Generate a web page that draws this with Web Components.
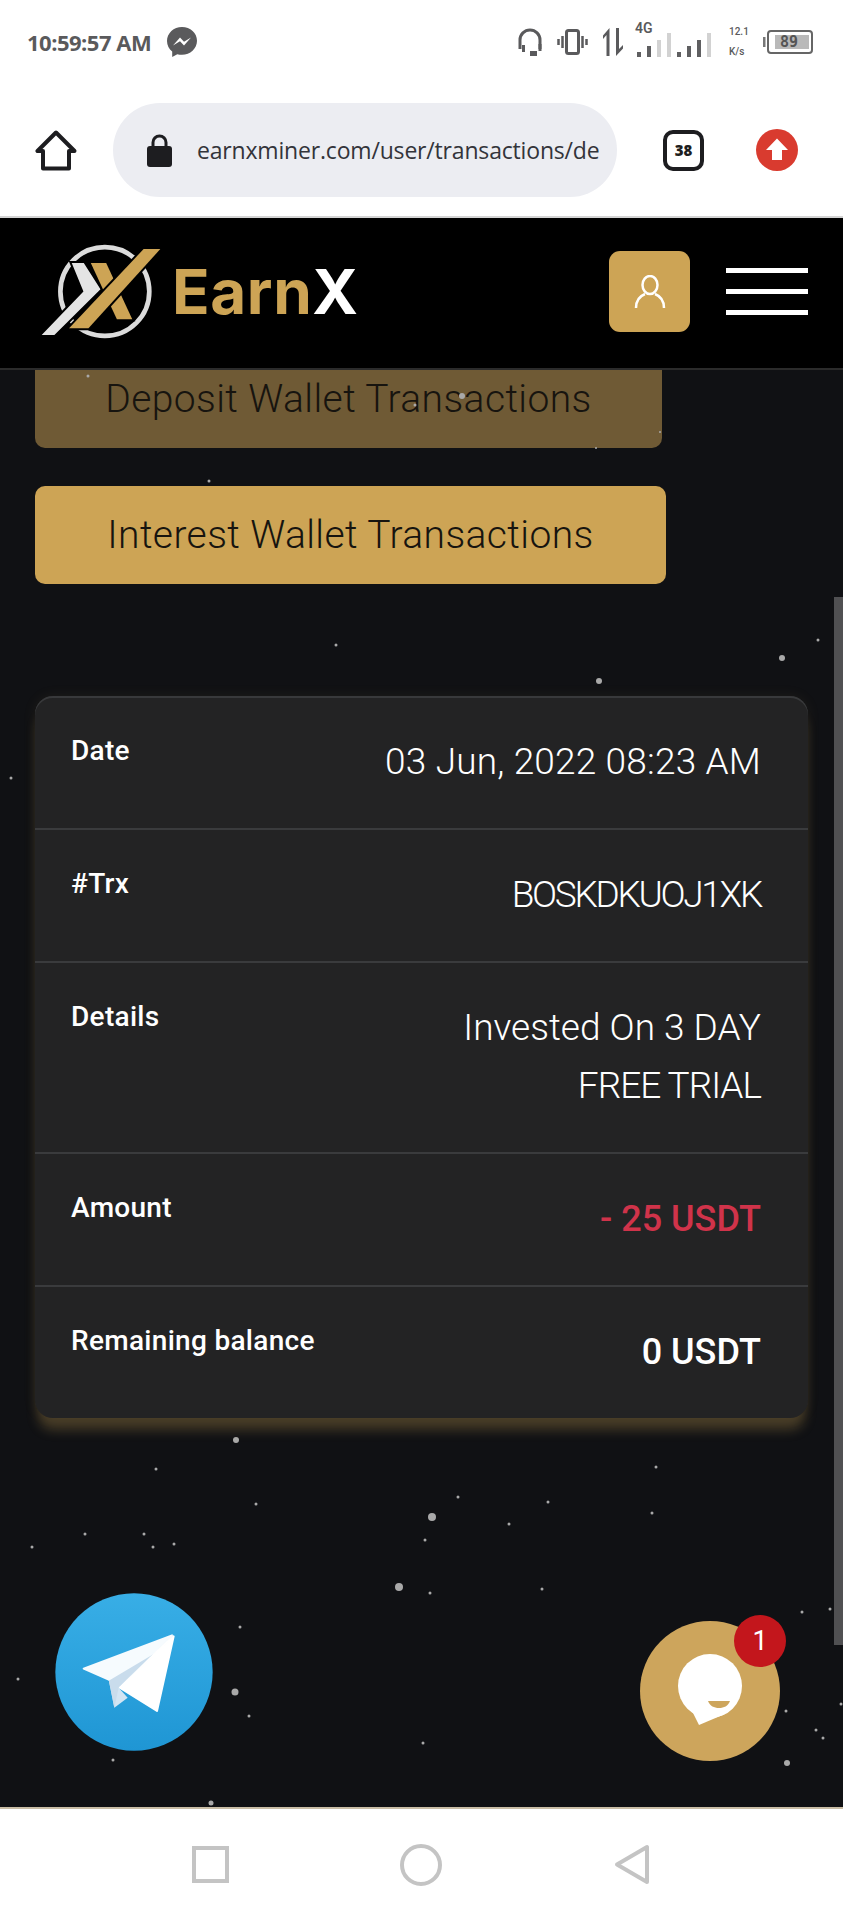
<!DOCTYPE html>
<html>
<head>
<meta charset="utf-8">
<title>EarnX</title>
<style>
  html, body { margin: 0; padding: 0; background: #101114; }
  body { font-family: Roboto, "Liberation Sans", sans-serif; }
  app-shell { width: 843px; height: 1920px; }
</style>
</head>
<body>
<app-shell>
  <status-bar></status-bar>
  <browser-bar url="earnxminer.com/user/transactions/de" tabs="38"></browser-bar>
  <site-header></site-header>
  <page-main>
    <wallet-button width="627" faded>Deposit Wallet Transactions</wallet-button>
    <wallet-button width="631">Interest Wallet Transactions</wallet-button>
    <tx-card>
      <tx-row track="0.17"><span slot="label">Date</span>03 Jun, 2022 08:23 AM</tx-row>
      <tx-row track="-2.3"><span slot="label">#Trx</span>BOSKDKUOJ1XK</tx-row>
      <tx-row><span slot="label">Details</span>Invested On 3 DAY<br><span style="letter-spacing:-1px">FREE TRIAL</span></tx-row>
      <tx-row tone="red"><span slot="label">Amount</span>- 25 USDT</tx-row>
      <tx-row tone="strong" last><span slot="label">Remaining balance</span>0 USDT</tx-row>
    </tx-card>
  </page-main>
  <nav-bar></nav-bar>
</app-shell>

<script>
class AppShell extends HTMLElement {
  constructor() {
    super();
    this.attachShadow({ mode: 'open' });
  }

  connectedCallback() {
    this.shadowRoot.innerHTML = `
      <style>
        :host { display: flex; flex-direction: column; overflow: hidden; }
      </style>
      <slot></slot>
    `;
  }
}

class StatusBar extends HTMLElement {
  constructor() {
    super();
    this.attachShadow({ mode: 'open' });
  }

  connectedCallback() {
    this.shadowRoot.innerHTML = `
      <style>
        :host {
          display: flex;
          align-items: center;
          height: 84px;
          padding: 0 30px 0 27px;
          box-sizing: border-box;
          background: #fff;
          color: #5a5a5c;
          font-family: "Open Sans", sans-serif;
        }
        .time { font-size: 22px; font-weight: 700; letter-spacing: -0.5px; width: 139px; white-space: nowrap; }
        .right { margin-left: auto; display: flex; align-items: center; }
        svg { display: block; }
        .net { position: relative; width: 100px; height: 34px; margin: 0 0 0 10px; }
        .net span { position: absolute; left: 2px; top: -4px; font: 600 14px/14px Roboto, sans-serif; }
        .net svg { position: absolute; left: 0; top: 0; }
        .speed { display: flex; flex-direction: column; width: 22px; margin: 0 12px 0 -4px; font: 500 10px/20px Roboto, sans-serif; text-align: left; gap: 0; }
        .batt { position: relative; width: 50px; height: 24px; }
        .batt span { position: absolute; left: 8px; right: 0; top: 0; text-align: center; font: 700 15px/24px "DejaVu Sans Mono", monospace; letter-spacing: 0; color: #555; padding-right: 6px; }
      </style>
      <div class="time">10:59:57 AM</div>
      <svg width="32" height="32" viewBox="0 0 32 32">
        <path d="M16 1C7.700 1 1 7.200 1 15c0 4.300 2 8 5.200 10.500V31l5.100-2.800c1.500.4 3 .6 4.700.6 8.300 0 15-6.200 15-14S24.300 1 16 1z" fill="#5a5a5c"/>
        <path d="M7 19.500l7-8 4 4.200 7-4.200-7 8-4-4.200z" fill="#fff"/>
      </svg>
      <div class="right">
        <svg width="26" height="30" viewBox="0 0 26 30" fill="none" stroke="#5a5a5c" stroke-width="3">
          <path d="M3 22V13a10 10 0 0 1 20 0v9"/>
          <path d="M6.500 18v7M23 17v7"/>
          <path d="M13 26.500h7" stroke-width="5"/>
        </svg>
        <svg style="margin-left:14px" width="31" height="26" viewBox="0 0 31 26" fill="none" stroke="#5a5a5c">
          <rect x="9.500" y="1.500" width="12" height="23" rx="2" stroke-width="3"/>
          <path d="M1.500 10v6M5.500 7v12M25.500 7v12M29.500 10v6" stroke-width="2.500"/>
        </svg>
        <svg style="margin-left:15px" width="20" height="28" viewBox="0 0 20 28" fill="#5a5a5c">
          <path d="M6.500 0v28h-3V7L0 11V7.500z"/>
          <path d="M13 0h3v21l4-4v3.500L13 28z"/>
        </svg>
        <div class="net">
          <span>4G</span>
          <svg width="100" height="34" viewBox="0 0 100 34">
            <g fill="#5f5f61">
              <rect x="4" y="27" width="4" height="5"/><rect x="14" y="21" width="4" height="11"/>
              <rect x="44" y="27" width="4" height="5"/><rect x="54" y="21" width="4" height="11"/><rect x="64" y="15" width="4" height="17"/>
            </g>
            <g fill="#d2d2d2">
              <rect x="24" y="15" width="4" height="17"/><rect x="34" y="8" width="4" height="24"/><rect x="74" y="8" width="4" height="24"/>
            </g>
          </svg>
        </div>
        <div class="speed"><span>12.1</span><span>K/s</span></div>
        <div class="batt">
          <svg width="50" height="24" viewBox="0 0 50 24">
            <rect x="0" y="7" width="2.500" height="10" fill="#777"/>
            <rect x="5" y="1" width="44" height="22" rx="3" fill="none" stroke="#666" stroke-width="2"/>
            <rect x="12" y="5" width="34" height="14" fill="#b9b9b9"/>
          </svg>
          <span>89</span>
        </div>
      </div>
    `;
  }
}

class BrowserBar extends HTMLElement {
  constructor() {
    super();
    this.attachShadow({ mode: 'open' });
  }

  connectedCallback() {
    this.shadowRoot.innerHTML = `
      <style>
        :host {
          display: flex;
          align-items: center;
          height: 134px;
          padding: 0 45px 0 35px;
          box-sizing: border-box;
          background: #fff;
          border-bottom: 2px solid #d4d4d4;
          color: #1d1d20;
        }
        svg { display: block; flex: none; }
        .pill {
          display: flex;
          align-items: center;
          width: 504px;
          height: 94px;
          margin: 0 46px 0 36px;
          padding-left: 33px;
          box-sizing: border-box;
          border-radius: 47px;
          background: #ecedf2;
        }
        .url {
          margin-left: 24px;
          font: 500 23px/1 "Open Sans", sans-serif;
          letter-spacing: -0.18px;
          color: #33343a;
          white-space: nowrap;
        }
        .tabs {
          display: flex;
          align-items: center;
          justify-content: center;
          width: 41px;
          height: 41px;
          box-sizing: border-box;
          border: 4px solid #1d1d20;
          border-radius: 10px;
          font: 800 15px/1 "Open Sans", sans-serif;
          margin-right: 52px;
        }
      </style>
      <svg width="42" height="41" viewBox="0 0 42 41" fill="none" stroke="#1d1d20" stroke-width="4" stroke-linejoin="round">
        <path d="M21 2.500L2.500 21h5.500v17.500h26V21h5.500z"/>
      </svg>
      <div class="pill">
        <svg width="27" height="33" viewBox="0 0 27 33">
          <path d="M7 14V8.500a6.500 6.500 0 0 1 13 0V14" fill="none" stroke="#1d1d20" stroke-width="3"/>
          <rect x="1" y="12" width="25" height="21" rx="3" fill="#1d1d20"/>
        </svg>
        <span class="url">${this.getAttribute('url')}</span>
      </div>
      <div class="tabs">${this.getAttribute('tabs')}</div>
      <svg width="42" height="42" viewBox="0 0 42 42">
        <circle cx="21" cy="21" r="21" fill="#d93b2f"/>
        <path d="M21 9.500L32 21h-6v10H16V21h-6z" fill="#fff"/>
      </svg>
    `;
  }
}

class SiteHeader extends HTMLElement {
  constructor() {
    super();
    this.attachShadow({ mode: 'open' });
  }

  connectedCallback() {
    this.shadowRoot.innerHTML = `
      <style>
        :host {
          display: flex;
          align-items: center;
          height: 152px;
          padding: 0 35px 3px 40px;
          box-sizing: border-box;
          background: #000;
          border-bottom: 2px solid #2b2b2b;
        }
        svg { display: block; }
        .brand { display: flex; align-items: center; gap: 13px; }
        .word { font: 700 62px/1 Inter, sans-serif; color: #cda455; letter-spacing: 0.6px; margin-left: -3px; }
        .word b { color: #fff; font-weight: 700; }
        .user {
          display: flex;
          align-items: center;
          justify-content: center;
          width: 81px;
          height: 81px;
          margin: 0 36px 0 auto;
          border-radius: 11px;
          background: #cda455;
        }
        .burger { display: flex; flex-direction: column; gap: 16px; width: 82px; }
        .burger i { display: block; height: 5px; background: #fff; }
      </style>
      <div class="brand">
        <svg width="122" height="97" viewBox="60 40 365 290">
          <circle cx="254" cy="185" r="133" fill="none" stroke="#dcdcdc" stroke-width="14"/>
          <g stroke="#000" stroke-width="12" paint-order="stroke" stroke-linejoin="miter">
            <path d="M155 100h36l50 78L103 315H65l125-130z" fill="#e4e4e4"/>
            <path d="M212 100h46l78 168h-46z" fill="#cda455"/>
            <path d="M370 58h50L205 295h-58z" fill="#cda455"/>
          </g>
        </svg>
        <div class="word">Earn<b>X</b></div>
      </div>
      <div class="user">
        <svg width="32" height="33" viewBox="0 0 32 33" fill="none" stroke="#fff" stroke-width="2.500">
          <ellipse cx="16" cy="10" rx="7.500" ry="9"/>
          <path d="M2 33c0-7 4-12 9-14M30 33c0-7-4-12-9-14"/>
        </svg>
      </div>
      <div class="burger"><i></i><i></i><i></i></div>
    `;
  }
}

class PageMain extends HTMLElement {
  constructor() {
    super();
    this.attachShadow({ mode: 'open' });
  }

  connectedCallback() {
    this.shadowRoot.innerHTML = `
      <style>
        :host {
          display: flex;
          flex-direction: column;
          align-items: flex-start;
          position: relative;
          flex: 1;
          padding: 0 35px;
          overflow: hidden;
          background: #101114;
        }
        .spacer { margin-top: -20px; }
        .scroll { position: absolute; right: 0; top: 227px; width: 9px; height: 1048px; background: #505052; }
        star-field { position: absolute; left: 0; top: 0; }
        .tg { position: absolute; left: 55px; bottom: 56px; }
        .chat { position: absolute; right: 63px; bottom: 46px; }
      </style>
      <div class="spacer"></div>
      <slot></slot>
      <star-field></star-field>
      <div class="scroll"></div>
      <telegram-fab class="tg"></telegram-fab>
      <chat-fab class="chat" count="1"></chat-fab>
    `;
  }
}

class StarField extends HTMLElement {
  constructor() {
    super();
    this.attachShadow({ mode: 'open' });
  }

  connectedCallback() {
    // x, y, r in page coordinates
    const stars = [
      [88,376,1.5],[462,396,3],[415,405,1.5],[596,448,1],[660,432,1],[209,481,1.5],
      [336,645,1.5],[599,681,3],[782,658,3],[818,640,1.5],[11,778,1.5],[836,1220,1],
      [236,1440,3],[156,1469,1.5],[656,1467,1.5],[256,1504,1.5],[458,1497,1.5],[548,1502,1.5],
      [432,1517,4],[652,1513,1.5],[509,1524,1.5],[85,1534,1.5],[144,1534,1.5],[174,1544,1.5],
      [153,1547,1.5],[32,1547,1.5],[425,1540,1.5],[399,1587,4],[430,1593,1.5],[542,1589,1.5],
      [240,1627,1.5],[235,1692,3.5],[249,1716,1.5],[18,1679,1.5],[113,1760,1.5],[423,1743,1.5],
      [211,1803,2.5],[802,1612,1.5],[830,1609,1.5],[786,1711,1.5],[816,1730,1.5],[823,1738,1.5],
      [787,1763,3],[841,1704,1.5]
    ];
    const dots = stars.map(([x, y, r]) => `<circle cx="${x}" cy="${y - 370}" r="${r}"/>`).join('');
    this.shadowRoot.innerHTML = `
      <style>
        :host { display: block; width: 843px; height: 1437px; }
        svg { display: block; }
      </style>
      <svg width="843" height="1437" fill="#a9a9a9">${dots}</svg>
    `;
  }
}

class WalletButton extends HTMLElement {
  constructor() {
    super();
    this.attachShadow({ mode: 'open' });
  }

  connectedCallback() {
    const faded = this.hasAttribute('faded');
    this.shadowRoot.innerHTML = `
      <style>
        :host {
          display: flex;
          align-items: center;
          justify-content: center;
          width: ${this.getAttribute('width')}px;
          height: 98px;
          margin-bottom: 38px;
          border-radius: 10px;
          background: ${faded ? '#6f5a35' : '#cda455'};
          color: #17140f;
          font: 300 39px/1 Roboto, sans-serif;
          letter-spacing: 0.4px;
          white-space: nowrap;
          flex: none;
        }
      </style>
      <slot></slot>
    `;
  }
}

class TxCard extends HTMLElement {
  constructor() {
    super();
    this.attachShadow({ mode: 'open' });
  }

  connectedCallback() {
    this.shadowRoot.innerHTML = `
      <style>
        :host {
          display: block;
          position: relative;
          width: 773px;
          margin-top: 74px;
          padding-top: 1px;
          box-sizing: border-box;
          border-radius: 18px;
          background: #232324;
          box-shadow: inset 0 2px 0 #38393b, 0 15px 12px -3px rgba(205, 164, 85, .28), 0 0 14px rgba(205, 164, 85, .08);
          z-index: 1;
        }
      </style>
      <slot></slot>
    `;
  }
}

class TxRow extends HTMLElement {
  constructor() {
    super();
    this.attachShadow({ mode: 'open' });
  }

  connectedCallback() {
    const tone = this.getAttribute('tone');
    const color = tone === 'red' ? '#d0334a' : '#fff';
    const weight = tone ? 500 : 300;
    const size = tone ? 36 : 37;
    const track = this.getAttribute('track') || 0;
    this.shadowRoot.innerHTML = `
      <style>
        :host {
          display: flex;
          justify-content: space-between;
          align-items: flex-start;
          padding: 36px 47px 37px 36px;
          border-bottom: ${this.hasAttribute('last') ? '0' : '2px solid #3a3b3d'};
        }
        .label { margin-top: -2px; font: 500 28px/40px Roboto, sans-serif; letter-spacing: 0.3px; color: #fff; white-space: nowrap; }
        .value { font: ${weight} ${size}px/58px Roboto, sans-serif; letter-spacing: ${track}px; color: ${color}; text-align: right; white-space: nowrap; }
      </style>
      <div class="label"><slot name="label"></slot></div>
      <div class="value"><slot></slot></div>
    `;
  }
}

class TelegramFab extends HTMLElement {
  constructor() {
    super();
    this.attachShadow({ mode: 'open' });
  }

  connectedCallback() {
    this.shadowRoot.innerHTML = `
      <style>
        :host { display: block; width: 158px; height: 158px; }
        svg { display: block; }
      </style>
      <svg width="158" height="158" viewBox="45 38 472 474">
        <defs>
          <linearGradient id="tg" x1="0" y1="0" x2="0" y2="1">
            <stop offset="0" stop-color="#38aee6"/>
            <stop offset="1" stop-color="#1f96d4"/>
          </linearGradient>
        </defs>
        <circle cx="281" cy="275" r="236" fill="url(#tg)"/>
        <path d="M205 298L222 382L262 352L235 322Z" fill="#d3e5f3"/>
        <path d="M205 298L350 212L235 322L222 382Z" fill="#c9dcec"/>
        <path d="M130 265L395 165L350 212L205 298Z" fill="#f6fbfe" stroke="#f6fbfe" stroke-width="6" stroke-linejoin="round"/>
        <path d="M400 168L350 392L238 322L352 212Z" fill="#fff" stroke="#fff" stroke-width="6" stroke-linejoin="round"/>
      </svg>
    `;
  }
}

class ChatFab extends HTMLElement {
  constructor() {
    super();
    this.attachShadow({ mode: 'open' });
  }

  connectedCallback() {
    this.shadowRoot.innerHTML = `
      <style>
        :host {
          display: flex;
          align-items: center;
          justify-content: center;
          position: absolute;
          width: 140px;
          height: 140px;
          border-radius: 50%;
          background: #cda55c;
        }
        svg { display: block; }
        .badge {
          position: absolute;
          top: -6px;
          right: -6px;
          display: flex;
          align-items: center;
          justify-content: center;
          width: 52px;
          height: 52px;
          border-radius: 50%;
          background: #c3161c;
          color: #fff;
          font: 400 27px/1 Roboto, sans-serif;
        }
      </style>
      <svg width="70" height="76" viewBox="0 0 70 76">
        <circle cx="35" cy="33" r="32" fill="#fff"/>
        <path d="M17 58l7 14 26-11z" fill="#fff"/>
        <path d="M33 48h22c-2 5-6 7-11 7s-9-2-11-7z" fill="#cda55c"/>
      </svg>
      <div class="badge">${this.getAttribute('count')}</div>
    `;
  }
}

class NavBar extends HTMLElement {
  constructor() {
    super();
    this.attachShadow({ mode: 'open' });
  }

  connectedCallback() {
    this.shadowRoot.innerHTML = `
      <style>
        :host {
          display: flex;
          justify-content: center;
          align-items: flex-start;
          gap: 171px;
          height: 113px;
          padding: 35px 2px 0 0;
          box-sizing: border-box;
          background: #fff;
          border-top: 2px solid #c9bda6;
        }
        svg { display: block; }
      </style>
      <svg width="37" height="41" viewBox="0 0 37 41" fill="none" stroke="#c4c4c4" stroke-width="4"><rect x="2" y="4" width="33" height="33"/></svg>
      <svg width="42" height="42" viewBox="0 0 42 42" fill="none" stroke="#c4c4c4" stroke-width="4"><circle cx="21" cy="21" r="19"/></svg>
      <svg width="37" height="41" viewBox="0 0 37 41" fill="none" stroke="#c4c4c4" stroke-width="4" stroke-linejoin="round"><path d="M34 3v35L4 20.500z"/></svg>
    `;
  }
}

customElements.define('app-shell', AppShell);
customElements.define('status-bar', StatusBar);
customElements.define('browser-bar', BrowserBar);
customElements.define('site-header', SiteHeader);
customElements.define('star-field', StarField);
customElements.define('page-main', PageMain);
customElements.define('wallet-button', WalletButton);
customElements.define('tx-card', TxCard);
customElements.define('tx-row', TxRow);
customElements.define('telegram-fab', TelegramFab);
customElements.define('chat-fab', ChatFab);
customElements.define('nav-bar', NavBar);
</script>
</body>
</html>
